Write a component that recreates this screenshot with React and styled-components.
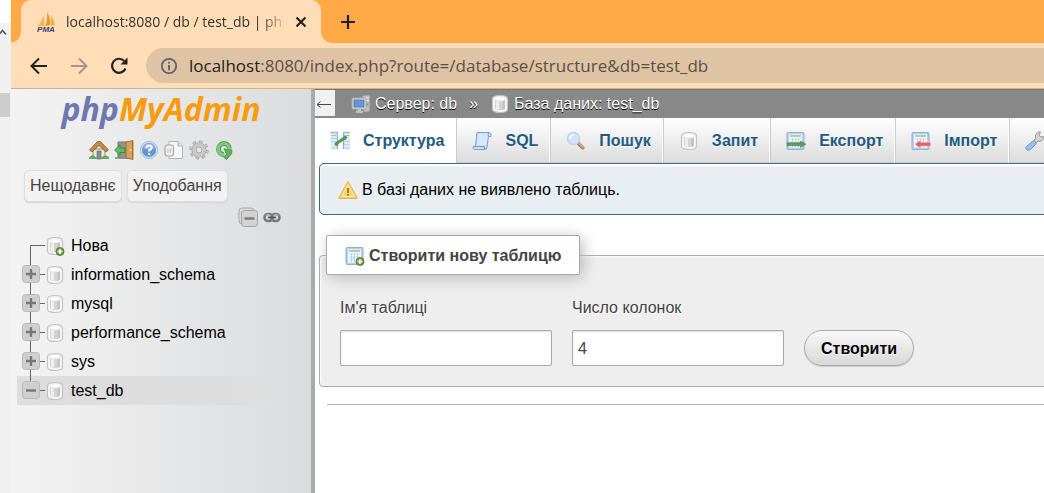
import React from "react";
import styled, { createGlobalStyle, css } from "styled-components";

const Global = createGlobalStyle`
  *, *::before, *::after { box-sizing: border-box; }
  body {
    margin: 0;
    overflow: hidden;
    background: #fff;
    color: #444;
    font: 16px/20px "Liberation Sans", Arial, sans-serif;
  }
  button, input { font: inherit; color: inherit; }
  a { color: inherit; text-decoration: none; }
  svg { display: block; flex: none; }
`;

/* ---------- icons ---------- */

const Icon = ({ size = 20, children, box = "0 0 20 20", ...rest }) => (
  <svg width={size} height={size} viewBox={box} fill="none" aria-hidden="true" {...rest}>
    {children}
  </svg>
);

const SailLogo = () => (
  <Icon size={20}>
    <path d="M8 3 L8.400 14 L1 14 Q6 10 8 3Z" fill="#f5b45a" />
    <path d="M11 0 Q15 6 14 13 L9 14 Q12 8 11 0Z" fill="#f7941e" />
    <path d="M15 3 Q18 8 19 13 L14.500 13.500 Q16 8 15 3Z" fill="#f9a94a" />
    <text x="10" y="19.500" textAnchor="middle" fontFamily="Liberation Sans, Arial, sans-serif" fontSize="8" fontWeight="700" fontStyle="italic" fill="#3a3d72">PMA</text>
  </Icon>
);

const CloseIcon = () => (
  <Icon size={12} box="0 0 12 12"><path d="M1.500 1.500 L10.500 10.500 M10.500 1.500 L1.500 10.500" stroke="#222" strokeWidth="2.200" /></Icon>
);
const AddIcon = () => (
  <Icon size={16} box="0 0 16 16"><path d="M8 1 V15 M1 8 H15" stroke="#222" strokeWidth="2.200" /></Icon>
);
const BackIcon = () => (
  <Icon size={18} box="0 0 18 18"><path d="M17 9 H2 M9 1.500 L1.500 9 L9 16.500" stroke="#222" strokeWidth="2" /></Icon>
);
const ForwardIcon = () => (
  <Icon size={18} box="0 0 18 18"><path d="M1 9 H16 M9 1.500 L16.500 9 L9 16.500" stroke="#a89480" strokeWidth="2" /></Icon>
);
const ReloadIcon = () => (
  <Icon size={18} box="0 0 18 18">
    <path d="M15.500 11.500 A7 7 0 1 1 14.200 4" stroke="#222" strokeWidth="2.200" />
    <path d="M17.500 0.500 V7.500 H10.500 Z" fill="#222" />
  </Icon>
);
const InfoIcon = () => (
  <Icon size={18} box="0 0 18 18">
    <circle cx="9" cy="9" r="7.200" stroke="#5f6368" strokeWidth="1.800" />
    <path d="M9 8 V13.200 M9 4.800 V6.600" stroke="#5f6368" strokeWidth="1.900" />
  </Icon>
);

const HomeIcon = () => (
  <Icon>
    <rect x="4" y="9" width="12" height="9" fill="#e9e9e4" stroke="#8e8e86" />
    <rect x="8" y="11" width="4" height="8" fill="#8b8b8b" stroke="#666" strokeWidth=".6" />
    <path d="M0.500 10 L8 2 Q10 0.600 12 2 L19.500 10 L17 12 L10 5.500 L3 12 Z" fill="#c58b45" stroke="#8c5a24" strokeWidth=".8" />
    <path d="M0 18.500 Q1 15 5 16 Q7 17 7 18.500Z M13 18.500 Q13 16 16 16 Q20 16 20 18.500Z" fill="#64b25c" stroke="#3c8a3c" strokeWidth=".5" />
  </Icon>
);
const ExitIcon = () => (
  <Icon>
    <path d="M4 2 H14 V18 H4Z" fill="#8f9494" stroke="#737878" />
    <path d="M1 18 H17" stroke="#888" strokeWidth="1.500" />
    <path d="M12 2 L19 0.500 V19.500 L12 18Z" fill="#d7a05a" stroke="#9a6425" strokeWidth=".8" />
    <path d="M18.500 1 V19" stroke="#a86f30" />
    <circle cx="16.800" cy="10" r=".9" fill="#ffe94d" />
    <path d="M0.600 10 L6 4.800 V8 H11 V12.500 H6 V15.500Z" fill="#63b95a" stroke="#338236" strokeWidth=".8" />
  </Icon>
);
const HelpIcon = () => (
  <Icon>
    <circle cx="10" cy="10" r="8.500" fill="#d4e3f4" stroke="#9db9da" />
    <circle cx="10" cy="10" r="7" fill="#6496d0" />
    <path d="M4 8 A6.300 6.300 0 0 1 16 8 Q10 11 4 8Z" fill="#8fb5e0" />
    <path d="M7.400 8 Q7.400 5.500 10 5.500 Q12.700 5.500 12.700 7.700 Q12.700 9.200 10.200 10 V11.500 M10.200 13 V15" stroke="#fff" strokeWidth="1.900" />
  </Icon>
);
const DocsIcon = () => (
  <Icon>
    <path d="M5 1.500 H14 L18.500 6 V18.500 H5Z" fill="#f7f7f7" stroke="#b4b4b4" />
    <path d="M14 1.500 V6 H18.500" fill="#ddd" stroke="#b4b4b4" />
    <rect x="1" y="5" width="8.500" height="11" rx="2.500" fill="#eee" stroke="#aaa" strokeWidth="1.200" />
    <path d="M4 8.500 V13 M6.500 8.500 V13" stroke="#bbb" />
  </Icon>
);
const GearIcon = () => (
  <Icon>
    <circle cx="10" cy="10" r="8" stroke="#9a9a9a" strokeWidth="3.200" strokeDasharray="3.140 3.140" />
    <circle cx="10" cy="10" r="8" stroke="#c9c9c9" strokeWidth="2.200" strokeDasharray="2.200 4.080" strokeDashoffset="-0.470" />
    <circle cx="10" cy="10" r="5" stroke="#9b9b9b" strokeWidth="5" />
    <circle cx="10" cy="10" r="5" stroke="#c8c8c8" strokeWidth="3.800" />
  </Icon>
);
const RefreshIcon = () => (
  <Icon>
    <path d="M15.500 8.500 A5.500 5.500 0 1 0 10 14.500" stroke="#4c9c52" strokeWidth="4.800" />
    <path d="M10 8.800 L18 10 L17.500 14 L12.500 19.500 L10 17.500 L12.500 14Z" fill="#5db45a" stroke="#3f9146" strokeWidth=".8" />
    <path d="M15.300 8.200 A5.500 5.500 0 1 0 10.500 14.500" stroke="#83c97b" strokeWidth="3.200" />
  </Icon>
);
const CollapseIcon = () => (
  <Icon>
    <rect x="1" y="1" width="15" height="16" rx="3" fill="#d8d8d8" stroke="#aaa" />
    <rect x="3.500" y="3.500" width="16" height="16" rx="3" fill="#d2d2d2" stroke="#a3a3a3" />
    <path d="M6.500 11.500 H16.500" stroke="#777" strokeWidth="2.400" />
  </Icon>
);
const ChainIcon = () => (
  <svg width="18" height="20" viewBox="0 0 18 20" fill="none" aria-hidden="true">
    <rect x="1.500" y="7" width="8" height="7" rx="3.500" stroke="#777" strokeWidth="2.600" />
    <rect x="8.500" y="7" width="8" height="7" rx="3.500" stroke="#777" strokeWidth="2.600" />
    <path d="M5 10.500 H13" stroke="#555" strokeWidth="1.800" />
    <path d="M2 8.500 Q5 6 8 8.500 M10 8.500 Q13 6 16 8.500" stroke="#b5b5b5" strokeWidth=".8" />
  </svg>
);

const Cylinder = () => (
  <>
    <path d="M2.500 5 Q2.500 1.500 10 1.500 Q17.500 1.500 17.500 5 V15 Q17.500 18.500 10 18.500 Q2.500 18.500 2.500 15Z" fill="#f6f6f6" stroke="#c4c4c4" strokeWidth="1.200" />
    <path d="M5 6 V14.500 Q6 16 10 16 Q14 16 15 14.500 V6 Q10 8.500 5 6Z" fill="#d4d4d4" />
    <path d="M6 7 V15 Q7.500 15.600 9 15.700 V7.600Z" fill="#efefef" />
    <path d="M12.500 7.400 V15.600 Q14.200 15.200 15 14.500 V6.500Z" fill="#c2c2c2" />
    <ellipse cx="10" cy="4.800" rx="5.500" ry="2" fill="#fff" stroke="#ddd" strokeWidth=".6" />
  </>
);
const PlusBadge = () => (
  <>
    <circle cx="15" cy="15.500" r="4" fill="#6d9f47" stroke="#456f2a" strokeWidth=".8" />
    <path d="M15 13 V18 M12.500 15.500 H17.500" stroke="#fff" strokeWidth="1.600" />
  </>
);
const DatabaseIcon = ({ added }) => (
  <Icon><Cylinder />{added && <PlusBadge />}</Icon>
);
const ServerIcon = () => (
  <Icon>
    <path d="M11 2 L13 1 H19 V17 L17.500 18 H12Z" fill="#bdbdbd" stroke="#8a8a8a" strokeWidth=".8" />
    <path d="M13.500 4 H18 M13.500 6.500 H18" stroke="#ededed" />
    <path d="M16.500 9.500 V11.500" stroke="#55b04c" strokeWidth="1.600" />
    <rect x="1" y="4" width="14" height="11" rx="1" fill="#dedede" stroke="#a5a5a5" />
    <rect x="3" y="6" width="10" height="7" fill="#6696d6" stroke="#4678bd" strokeWidth=".8" />
    <path d="M6.500 15 H10 V17 H12 V19 H5 V17 H6.500Z" fill="#c4c4c4" />
  </Icon>
);
const StructureIcon = () => (
  <Icon>
    <path d="M0.500 1 H8 V18.500 H0.500Z M13 1 H20 V18.500 H13Z" fill="#dfeaf8" />
    <path d="M0.500 1.500 H8 M13 1.500 H20" stroke="#9dbce6" strokeWidth="1.600" />
    <path d="M1.500 4.500 H6 M14.500 4.500 H19" stroke="#9bcd8b" strokeWidth="1.200" />
    <path d="M1 7.500 H7 M1 10.500 H7 M1 17 H7 M14 10.500 H20 M14 13.500 H20 M14 17 H20" stroke="#bcd2ee" />
    <path d="M7.500 1.500 V18 M13.500 1.500 V18" stroke="#8eb0dd" strokeWidth="1.200" />
    <path d="M6.500 12.500 L14.500 7" stroke="#58965a" strokeWidth="3" />
    <circle cx="6.500" cy="13" r="2" fill="#58965a" />
    <circle cx="15" cy="6.800" r="2" fill="#58965a" />
  </Icon>
);
const ScrollIcon = () => (
  <Icon>
    <path d="M5 1.500 H17 Q19.800 2 19 5.500 H16.500 L15 16 Q15 18.500 12.500 18.500 H2.500 Q.5 18.500 1 15.500 H3.500Z" fill="#c9dff6" stroke="#7ba2d3" />
    <path d="M6.500 3 H15.500 L13.500 14.500 H5Z" fill="#d8e8f8" />
    <path d="M1.500 15.500 H12 Q12.200 18 13.500 18" stroke="#6c95cb" strokeWidth="1.200" />
    <path d="M16.500 2 Q16 3.500 16.500 5.500" stroke="#7ba2d3" />
  </Icon>
);
const SearchIcon = () => (
  <Icon>
    <path d="M12 12 L16.800 16.800" stroke="#a88468" strokeWidth="3.600" strokeLinecap="round" />
    <path d="M13 12 L17 16" stroke="#e0b690" strokeWidth="1.400" strokeLinecap="round" />
    <circle cx="7.500" cy="7.500" r="6" fill="#cfe4fa" stroke="#c3d2e5" strokeWidth="1.600" />
    <path d="M4 8 Q4 4 8 4" stroke="#fff" strokeWidth="1.600" />
  </Icon>
);
const TableSheet = () => (
  <>
    <rect x="1" y="1.500" width="17" height="17" rx="1" fill="#b4cff1" stroke="#8eb0dd" />
    <rect x="3" y="3.500" width="13" height="13" fill="#fff" />
    <path d="M4 5 H15" stroke="#94cc80" strokeWidth="1.600" />
    <path d="M4 8 H15 M4 11 H15 M4 14 H15 M6.500 7.500 V16 M9.500 7.500 V16 M12.500 7.500 V16" stroke="#bbd0ec" />
  </>
);
const ExportIcon = () => (
  <Icon><TableSheet /><path d="M1 11.800 H14.500 V10 L19.800 13.200 L14.500 16.500 V14.800 H1Z" fill="#5f9c56" stroke="#4a8244" strokeWidth=".6" /></Icon>
);
const ImportIcon = () => (
  <Icon><TableSheet /><path d="M19.500 11.500 H9.500 V9.500 L4 13.200 L9.500 17 V15 H19.500Z" fill="#f05a5a" stroke="#f0b0b0" strokeWidth=".6" /></Icon>
);
const TableAddIcon = () => (<Icon><TableSheet /><PlusBadge /></Icon>);
const WrenchIcon = () => (
  <Icon>
    <path d="M9 9.500 L10.500 7.500 Q9.500 3.500 12.500 1.500 Q14 .5 15.500 1 L14 4 L15.500 6 L18.500 5.500 Q19.500 8 17 9.500 Q15 11 12.800 10 L11.500 11.500Z" fill="#d2d2d2" stroke="#999" />
    <path d="M8.500 9.500 L11.500 12.500 L5.500 18.500 Q3 20 1.500 18.500 Q0 17 1.500 15.500Z" fill="#9bbeee" stroke="#7399d3" />
  </Icon>
);
const WarningIcon = () => (
  <Icon>
    <path d="M10 1.500 L19 17.500 Q19.500 18.500 18 18.500 H2 Q.5 18.500 1 17.500Z" fill="#f8cb5b" stroke="#e5b04a" strokeLinejoin="round" />
    <path d="M10 4.500 L16.500 16.500 H3.500Z" fill="#f4d373" stroke="#fff0bd" />
    <path d="M10 8 V13 M10 14 V15.800" stroke="#94702e" strokeWidth="1.700" />
  </Icon>
);
const PanelArrow = () => (
  <svg width="20" height="26" viewBox="0 0 20 26" fill="none" aria-hidden="true">
    <path d="M2 14.500 H16 M5.500 11.500 L2 14.500 L5.500 17.500" stroke="#444" />
  </svg>
);

/* ---------- browser frame ---------- */

const Screen = styled.div`
  display: flex;
  min-height: 100vh;
`;
const EdgeStrip = styled.div`
  flex: 0 0 11px;
  padding-top: 23px;
  background: #f0f0f0 linear-gradient(#fff, #fff) no-repeat 0 0 / 100% 23px;
`;
const ScrollThumb = styled.div`
  width: 10px;
  height: 24px;
  margin-top: 52px;
  background: #cdcdcd;
`;
const Browser = styled.div`
  flex: 1;
  min-width: 0;
  display: flex;
  flex-direction: column;
`;
const TabStrip = styled.div`
  display: flex;
  height: 43px;
  background: #ffa947;
`;
const Flare = styled.span`
  align-self: flex-end;
  width: 10px;
  height: 10px;
  background: radial-gradient(circle at ${(p) => (p.$right ? "100%" : "0")} 0, #ffa947 9px, #ffdeb7 10px);
`;
const BrowserTab = styled.div`
  display: flex;
  align-items: center;
  width: 300px;
  padding: 0 14px 0 15px;
  border-radius: 10px 10px 0 0;
  background: #ffdeb7;
`;
const TabTitle = styled.span`
  flex: 1;
  margin: 0 6px 0 10px;
  white-space: nowrap;
  font: 14px/20px "Open Sans", sans-serif;
  color: #333;
  mask-image: linear-gradient(to right, #000 194px, transparent 222px);
`;
const PlainButton = styled.button`
  display: flex;
  padding: 0;
  border: 0;
  background: none;
`;
const NewTab = styled(PlainButton)`
  align-self: center;
  margin-left: 9px;
`;
const Toolbar = styled.div`
  display: flex;
  align-items: center;
  gap: 22px;
  height: 46px;
  padding-left: 19px;
  border-bottom: 1px solid #ccb394;
  background: #ffdeb7;
`;
const AddressBar = styled.div`
  flex: 1;
  display: flex;
  align-items: center;
  gap: 11px;
  height: 35px;
  margin-left: -4px;
  padding-left: 14px;
  border-radius: 18px 0 0 18px;
  background: #dfc3a5;
`;
const UrlText = styled.span`
  font: 17px/24px "Open Sans", sans-serif;
  color: #5a5048;
  white-space: nowrap;
`;
const Host = styled.span`
  color: #222;
`;

/* ---------- sidebar ---------- */

const Page = styled.div`
  flex: 1;
  display: flex;
  min-height: 0;
`;
const Sidebar = styled.aside`
  flex: 0 0 304px;
  border-right: 4px solid #aaa;
  background: linear-gradient(to right, #f3f3f3, #dbdcde);
`;
const Logo = styled.a`
  display: block;
  height: 51px;
  text-align: center;
  font: italic 700 32px/40px "Open Sans", sans-serif;
  color: #6c78af;
`;
const LogoAccent = styled.span`
  color: #f89c0e;
`;
const QuickLinks = styled.nav`
  display: flex;
  gap: 5px;
  padding-left: 78px;
`;
const ChoiceRow = styled.div`
  display: flex;
  gap: 5px;
  padding: 10px 0 0 13px;
`;
const ChoiceButton = styled.button`
  height: 32px;
  padding: 0 5px;
  border: 1px solid #ddd;
  border-radius: 5px;
  background: #f2f2f2;
  box-shadow: 0 1px 1px #d5d5d5;
`;
const TreeTools = styled.div`
  display: flex;
  gap: 5px;
  padding: 5px 0 4px 227px;
`;
const Tree = styled.ul`
  margin: 0;
  padding: 0 0 0 6px;
  list-style: none;
`;
const TreeItem = styled.li`
  display: flex;
  align-items: center;
  height: 29px;
  color: #000;
  ${(p) => p.$current && css`background: linear-gradient(to right, #ddd 70%, transparent);`}
`;
const TreeLink = styled.a`
  display: flex;
  align-items: center;
  gap: 6px;
  color: #000;
`;

const Branch = ({ kind, last }) => (
  <svg width="28" height="29" viewBox="0 0 28 29" fill="none" aria-hidden="true">
    <path d={kind === "new" ? "M30 14.500 H13.500 V29" : last ? "M13.500 0 V14.500 H30" : "M13.500 0 V29 M13.500 14.500 H30"} stroke="#666" />
    {kind !== "new" && (
      <>
        <rect x="5.500" y="5.500" width="17" height="17" rx="3" fill="#cfcfcf" stroke="#b8b8b8" />
        <path d={kind === "open" ? "M9 14.500 H19" : "M9 14 H19 M14 9 V19"} stroke="#777" strokeWidth="2.400" />
      </>
    )}
  </svg>
);

/* ---------- main panel ---------- */

const Main = styled.main`
  flex: 1;
  min-width: 0;
  overflow: hidden;
`;
const Crumbs = styled.nav`
  display: flex;
  align-items: flex-start;
  height: 29px;
  border-top: 1px solid #777;
  background: #888;
`;
const PanelToggle = styled(PlainButton)`
  width: 20px;
  height: 26px;
  margin-right: 16px;
  background: #f0f0f0;
`;
const Crumb = styled.a`
  display: flex;
  align-items: center;
  gap: 4px;
  height: 28px;
  color: #fff;
  text-shadow: 0 1px 0 #000;
  white-space: nowrap;
`;
const CrumbDivider = styled.span`
  margin: 0 12px;
  color: #fff;
  line-height: 28px;
  text-shadow: 0 1px 0 #000;
`;
const Tabs = styled.nav`
  display: flex;
  height: 45px;
`;
const Tab = styled.a`
  flex: none;
  display: flex;
  align-items: center;
  gap: 13px;
  padding: 1px 11px 0 15px;
  border-left: 1px solid #ccc;
  border-right: 1px solid #fff;
  border-bottom: 1px solid #ccc;
  background: linear-gradient(#fff, #dcdcdc);
  color: #235a81;
  font-weight: 700;
  text-shadow: 0 1px 0 #fff;
  ${(p) => p.$active && css`
    padding-left: 14px;
    border-color: #fff;
    background: #fff;
  `}
`;
const Notice = styled.div`
  display: flex;
  align-items: center;
  gap: 4px;
  height: 52px;
  margin: 0 -10px 20px 4px;
  padding: 2px 0 0 18px;
  border: 1px solid #3a6c7e;
  border-radius: 5px;
  background: #e8eef1;
  box-shadow: inset 0 2px 2px #fff;
  color: #000;
`;
const CreateBox = styled.fieldset`
  margin: 0 -10px 0 4px;
  padding: 23px 20px 20px;
  border: 1px solid #aaa;
  border-radius: 4px;
  background: #eee;
  box-shadow: inset 1px 1px 2px #fff;
  text-shadow: 1px 1px 2px #fff;
`;
const BoxTitle = styled.legend`
  display: flex;
  align-items: center;
  gap: 4px;
  height: 40px;
  margin-left: -14px;
  padding: 2px 18px 0 18px;
  border: 1px solid #aaa;
  border-radius: 2px;
  background: #fff;
  box-shadow: 3px 3px 15px #bbb;
  font-weight: 700;
`;
const Fields = styled.div`
  display: flex;
  align-items: flex-end;
  gap: 20px;
`;
const Field = styled.label`
  display: flex;
  flex-direction: column;
  gap: 12px;
  width: 212px;
`;
const TextInput = styled.input`
  width: 100%;
  height: 36px;
  padding: 2px 5px 0;
  border: 1px solid #aaa;
  border-radius: 2px;
  background: #fff;
  box-shadow: inset 0 1px 2px #ddd;
`;
const SubmitButton = styled.button`
  height: 36px;
  padding: 2px 16px 0;
  border: 1px solid #aaa;
  border-radius: 18px;
  background: linear-gradient(#f8f8f8, #d8d8d8);
  box-shadow: 0 1px 1px #ccc;
  color: #000;
  font-weight: 700;
  text-shadow: 0 1px 0 #fff;
`;
const Divider = styled.hr`
  height: 1px;
  margin: 17px 0 0 12px;
  border: 0;
  background: #bbb;
`;

const quickLinks = [
  ["Home", HomeIcon],
  ["Log out", ExitIcon],
  ["Documentation", HelpIcon],
  ["MySQL documentation", DocsIcon],
  ["Settings", GearIcon],
  ["Reload", RefreshIcon],
];
const databases = ["information_schema", "mysql", "performance_schema", "sys", "test_db"];
const tabs = [
  ["Структура", StructureIcon],
  ["SQL", ScrollIcon],
  ["Пошук", SearchIcon],
  ["Запит", DatabaseIcon],
  ["Експорт", ExportIcon],
  ["Імпорт", ImportIcon],
  ["", WrenchIcon],
];

export default function App() {
  return (
    <Screen>
      <Global />
      <EdgeStrip>
        <svg width="8" height="18" viewBox="0 0 8 18" fill="none" aria-hidden="true">
          <path d="M-1 11.500 L2.500 7.500 L6 11.500" stroke="#555" strokeWidth="1.600" />
        </svg>
        <ScrollThumb />
      </EdgeStrip>
      <Browser>
        <TabStrip>
          <Flare />
          <BrowserTab>
            <SailLogo />
            <TabTitle>localhost:8080 / db / test_db | ph</TabTitle>
            <PlainButton aria-label="Close tab"><CloseIcon /></PlainButton>
          </BrowserTab>
          <Flare $right />
          <NewTab aria-label="New tab"><AddIcon /></NewTab>
        </TabStrip>
        <Toolbar>
          <PlainButton aria-label="Back"><BackIcon /></PlainButton>
          <PlainButton aria-label="Forward"><ForwardIcon /></PlainButton>
          <PlainButton aria-label="Reload page"><ReloadIcon /></PlainButton>
          <AddressBar>
            <InfoIcon />
            <UrlText><Host>localhost</Host>:8080/index.php?route=/database/structure&amp;db=test_db</UrlText>
          </AddressBar>
        </Toolbar>
        <Page>
          <Sidebar>
            <Logo href="#">php<LogoAccent>MyAdmin</LogoAccent></Logo>
            <QuickLinks>
              {quickLinks.map(([name, Glyph]) => (
                <a key={name} href="#" aria-label={name}><Glyph /></a>
              ))}
            </QuickLinks>
            <ChoiceRow>
              <ChoiceButton>Нещодавнє</ChoiceButton>
              <ChoiceButton>Уподобання</ChoiceButton>
            </ChoiceRow>
            <TreeTools>
              <PlainButton aria-label="Collapse all"><CollapseIcon /></PlainButton>
              <PlainButton aria-label="Unlink from main panel"><ChainIcon /></PlainButton>
            </TreeTools>
            <Tree>
              <TreeItem>
                <Branch kind="new" />
                <TreeLink href="#"><DatabaseIcon added />Нова</TreeLink>
              </TreeItem>
              {databases.map((name) => {
                const current = name === "test_db";
                return (
                  <TreeItem key={name} $current={current}>
                    <PlainButton aria-label={name}><Branch kind={current ? "open" : "closed"} last={current} /></PlainButton>
                    <TreeLink href="#"><DatabaseIcon />{name}</TreeLink>
                  </TreeItem>
                );
              })}
            </Tree>
          </Sidebar>
          <Main>
            <Crumbs>
              <PanelToggle aria-label="Hide panel"><PanelArrow /></PanelToggle>
              <Crumb href="#"><ServerIcon />Сервер: db</Crumb>
              <CrumbDivider>»</CrumbDivider>
              <Crumb href="#"><DatabaseIcon />База даних: test_db</Crumb>
            </Crumbs>
            <Tabs>
              {tabs.map(([label, Glyph], i) => (
                <Tab key={i} href="#" $active={i === 0} aria-label={label || "Operations"}>
                  <Glyph />{label}
                </Tab>
              ))}
            </Tabs>
            <Notice role="status"><WarningIcon />В базі даних не виявлено таблиць.</Notice>
            <form onSubmit={(e) => e.preventDefault()}>
              <CreateBox>
                <BoxTitle><TableAddIcon />Створити нову таблицю</BoxTitle>
                <Fields>
                  <Field>Ім'я таблиці<TextInput type="text" /></Field>
                  <Field>Число колонок<TextInput type="text" inputMode="numeric" defaultValue="4" /></Field>
                  <SubmitButton type="submit">Створити</SubmitButton>
                </Fields>
              </CreateBox>
            </form>
            <Divider />
          </Main>
        </Page>
      </Browser>
    </Screen>
  );
}
